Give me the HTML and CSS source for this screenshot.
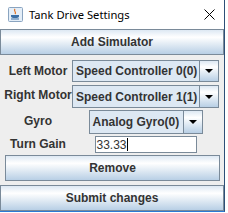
FILE: index.html
```html
<!DOCTYPE html>
<html lang="en">
<head>
  <meta charset="UTF-8">
  <title>Tank Drive Settings</title>
  <link rel="stylesheet" href="styles.css">
</head>
<body>
  <div class="window">
    <div class="titlebar">
      <svg class="app-icon" width="15" height="15" viewBox="0 0 15 15">
        <rect x="0.5" y="0.5" width="14" height="14" rx="1" fill="#e4eef8" stroke="#8aa4c0"/>
        <path d="M7 2 C5 4 9 5 7 7" stroke="#e07020" stroke-width="1.2" fill="none"/>
        <path d="M3 8 h8 v1.5 c0 2 -8 2 -8 0 z" fill="#3a6ea5"/>
        <path d="M3 12 h8" stroke="#3a6ea5" stroke-width="1"/>
      </svg>
      <span class="title">Tank Drive Settings</span>
      <svg class="close" width="11" height="11" viewBox="0 0 11 11">
        <path d="M0.5 0.5 L10.5 10.5 M10.5 0.5 L0.5 10.5" stroke="#000" stroke-width="1"/>
      </svg>
    </div>

    <div class="content">
      <button class="btn btn-wide">Add Simulator</button>

      <div class="form">
        <label class="lbl">Left Motor</label>
        <div class="combo combo-motor">
          <span class="combo-text">Speed Controller 0(0)</span>
          <span class="combo-arrow"></span>
        </div>

        <label class="lbl">Right Motor</label>
        <div class="combo combo-motor combo-second">
          <span class="combo-text">Speed Controller 1(1)</span>
          <span class="combo-arrow"></span>
        </div>

        <label class="lbl">Gyro</label>
        <div class="combo combo-gyro">
          <span class="combo-text">Analog Gyro(0)</span>
          <span class="combo-arrow"></span>
        </div>

        <label class="lbl">Turn Gain</label>
        <div class="field"><span>33.33</span><span class="caret"></span></div>

        <button class="btn btn-remove">Remove</button>
      </div>

      <button class="btn btn-wide btn-submit">Submit changes</button>
    </div>
  </div>
</body>
</html>
```

FILE: styles.css
```css
* {
  margin: 0;
  padding: 0;
  box-sizing: border-box;
}

body {
  background: #fff;
  font-family: 'Liberation Sans', Arial, sans-serif;
}

.window {
  width: 225px;
  height: 212px;
  background: #eeeeee;
  border-right: 1px solid #2d4f78;
  border-bottom: 1px solid #2a7ad5;
}

.titlebar {
  height: 29px;
  background: #fff;
  display: flex;
  align-items: center;
  padding-left: 8px;
}

.app-icon {
  margin-top: -1px;
}

.title {
  font-family: 'Noto Sans', sans-serif;
  font-size: 11.2px;
  color: #000;
  margin-left: 6px;
  margin-top: -1px;
}

.close {
  margin-left: auto;
  margin-right: 9px;
  margin-top: -1px;
}

.content {
  display: flex;
  flex-direction: column;
}

.btn {
  height: 26px;
  border: 1px solid #7a8a99;
  background: linear-gradient(#dde8f3, #ffffff 30%, #b8cfe5);
  font-family: 'Liberation Sans', Arial, sans-serif;
  font-weight: bold;
  font-size: 12px;
  color: #333;
}

.btn-wide {
  width: 224px;
}

.btn-submit {
  margin-top: 4px;
}

.form {
  display: grid;
  grid-template-columns: 66px 149px;
  padding-left: 5px;
  margin-top: 5px;
  align-items: center;
  justify-items: center;
}

.lbl {
  font-weight: bold;
  font-size: 12px;
  color: #333;
  white-space: nowrap;
}

.combo {
  display: flex;
  border: 1px solid #7a8a99;
  background: #dde8f3;
  font-weight: bold;
  font-size: 12px;
  color: #333;
}

.combo-motor {
  width: 147px;
  height: 22px;
}

.combo-second {
  margin-top: 3px;
  height: 23px;
}

.combo-gyro {
  width: 114px;
  height: 24px;
  margin-top: 2px;
}

.combo-text {
  flex: 1;
  display: flex;
  align-items: center;
  padding-left: 3px;
  border-right: 1px solid #7a8a99;
}

.combo-arrow {
  width: 18px;
  position: relative;
  background: linear-gradient(#dde8f3, #ffffff 30%, #b8cfe5);
}

.combo-arrow::after {
  content: '';
  position: absolute;
  left: 5px;
  top: 50%;
  margin-top: -2px;
  border-left: 4px solid transparent;
  border-right: 4px solid transparent;
  border-top: 4px solid #000;
}

.field {
  width: 102px;
  height: 17px;
  margin-top: 2px;
  background: #fff;
  border: 1px solid #7a8a99;
  font-size: 12px;
  color: #333;
  display: flex;
  align-items: center;
  padding-left: 1px;
}

.caret {
  width: 1px;
  height: 13px;
  background: #000;
}

.btn-remove {
  grid-column: 1 / 3;
  width: 215px;
  margin-top: 2px;
  justify-self: start;
}
```
